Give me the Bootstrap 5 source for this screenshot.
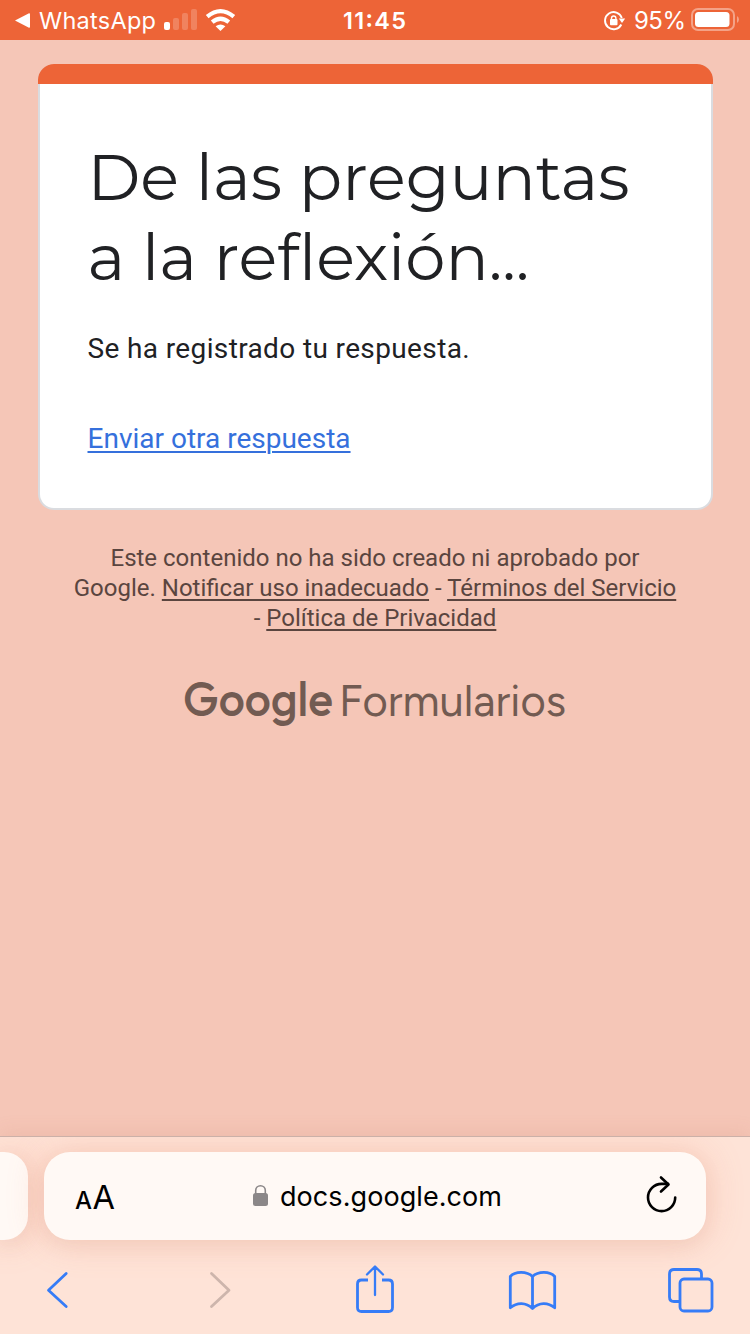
<!DOCTYPE html>
<html lang="es">
<head>
<meta charset="utf-8">
<meta name="viewport" content="width=device-width, initial-scale=1">
<title>De las preguntas a la reflexión...</title>
<link rel="stylesheet" href="https://cdn.jsdelivr.net/npm/bootstrap@5.3.0/dist/css/bootstrap.min.css">
<style>
  body { background: #f5c6b7; font-family: Roboto, sans-serif; color: #202124; }
  svg { display: block; flex: none; overflow: visible; }
  .ui { font-family: Inter, sans-serif; }
  .screen { height: 1334px; }
  .status { height: 40px; background: #ed6437; }
  .form-card { width: 675px; height: 446px; margin-top: 24px; border: 2px solid #dadce0; border-top: 0; border-radius: 16px; }
  .form-strip { height: 20px; margin: 0 -2px; background: #ed6437; border-radius: 16px 16px 0 0; }
  .form-content { padding: 53px 48px 0; }
  .form-title { font: 400 64px/80px Montserrat, Inter, sans-serif; color: #202124; white-space: nowrap; margin: 0 0 32px; }
  .msg { font-size: 28px; line-height: 40px; letter-spacing: .37px; margin-bottom: 50px; }
  .again { font-size: 28px; line-height: 40px; color: #3570dc; text-underline-offset: 3px; text-decoration-thickness: 2px; }
  .legal { font-size: 24px; line-height: 30px; color: #5a453f; margin-top: 33px; }
  .legal a { color: inherit; text-decoration-thickness: 2px; text-underline-offset: 3px; }
  .brand-text { fill: #725b52; font-family: Outfit, Montserrat, sans-serif; }
  .brand-text .product { font-family: Figtree, Montserrat, sans-serif; }
  .toolbar { height: 198px; background: #fee3d7; border-top: 1px solid #cbb0a8; padding-top: 15px; overflow: hidden; box-shadow: 0 -4px 18px rgba(190,110,85,.12); }
  .tab-prev { width: 28px; height: 88px; background: #fff9f5; border-radius: 0 24px 24px 0; box-shadow: 0 0 34px 4px rgba(242,130,100,.22), 0 6px 20px rgba(120,90,70,.07); }
  .address { width: 662px; height: 88px; margin-left: 16px; background: #fff9f5; border-radius: 26px; box-shadow: 0 0 34px 4px rgba(242,130,100,.22), 0 6px 20px rgba(120,90,70,.07); }
</style>
</head>
<body>
<div class="screen d-flex flex-column overflow-hidden">
  <header class="status">
    <svg class="ui" width="750" height="40" fill="#fff">
      <path d="M15 20.500 28.500 13.400Q30 12.800 30 14.300V26.700Q30 28.200 28.500 27.600Z"/>
      <text x="39" y="29" font-size="23.500" textLength="117">WhatsApp</text>
      <rect x="164" y="22" width="6" height="8" rx="2"/>
      <g opacity=".2"><rect x="173" y="18" width="6" height="12" rx="2"/><rect x="182" y="13" width="6" height="17" rx="2"/><rect x="191" y="9" width="6" height="21" rx="2"/></g>
      <g fill="none" stroke="#fff" stroke-width="4.200"><path d="M207.200 16.700Q220.500 5.500 233.800 16.700"/><path d="M212.200 22.200Q220.500 15.200 228.800 22.200"/></g>
      <path d="M215.600 26.300Q220.500 22.500 225.400 26.300L220.500 31Z"/>
      <text x="343" y="29" font-size="23.500" font-weight="600" textLength="63">11:45</text>
      <path d="M621.300 24.500A8.600 8.600 0 1 1 621.800 18" fill="none" stroke="#fff" stroke-width="1.900"/>
      <path d="M618.800 18.500H625.200L622 23Z"/>
      <rect x="610" y="19" width="7.500" height="6.300" rx="1"/><path d="M611.500 20V18.200a2.200 2.200 0 0 1 4.400 0V20" fill="none" stroke="#fff" stroke-width="1.400"/>
      <text x="634" y="29" font-size="24" textLength="52">95%</text>
      <rect x="692" y="9" width="42" height="21" rx="6" fill="none" stroke="#fff" stroke-opacity=".4" stroke-width="2"/>
      <rect x="695" y="12" width="34.500" height="15" rx="3.500"/><path d="M737 16Q739 17.300 739 19.500T737 23Z" opacity=".4"/>
    </svg>
  </header>

  <main class="flex-grow-1">
    <section class="form-card card mx-auto">
      <div class="form-strip"></div>
      <div class="form-content">
        <h1 class="form-title">De las preguntas<br>a la reflexión...</h1>
        <p class="msg">Se ha registrado tu respuesta.</p>
        <a class="again" href="#">Enviar otra respuesta</a>
      </div>
    </section>
    <p class="legal text-center mb-0">Este contenido no ha sido creado ni aprobado por<br>Google. <a href="#">Notificar uso inadecuado</a> - <a href="#">Términos del Servicio</a><br>- <a href="#">Política de Privacidad</a></p>
    <svg class="brand-text" width="750" height="100">
      <text x="183" y="82.500" font-size="49" font-weight="500" textLength="150" lengthAdjust="spacingAndGlyphs">Google</text>
      <text class="product" x="339" y="83" font-size="44" font-weight="400" textLength="227" lengthAdjust="spacingAndGlyphs">Formularios</text>
    </svg>
  </main>

  <footer class="toolbar ui">
    <div class="d-flex">
      <div class="tab-prev"></div>
      <div class="address">
        <svg width="662" height="88">
          <text x="31" y="56.500" font-size="24" font-weight="500" textLength="17" lengthAdjust="spacingAndGlyphs">A</text>
          <text x="48.500" y="56.500" font-size="33" textLength="22.500" lengthAdjust="spacingAndGlyphs">A</text>
          <rect x="209" y="41" width="15" height="13" rx="2.500" fill="#8b8788"/><path d="M211.700 42V38.500a4.800 4.800 0 0 1 9.600 0V42" fill="none" stroke="#8b8788" stroke-width="1.600"/>
          <text x="236" y="54" font-size="27" textLength="222">docs.google.com</text>
          <g fill="none" stroke="#000" stroke-width="2.600" stroke-linecap="round" stroke-linejoin="round"><path d="M631.200 45.500A13.600 13.600 0 1 1 617.600 31.900H624"/><path d="M617 25.500 624.500 32.500 617 39.500"/></g>
        </svg>
      </div>
    </div>
    <svg width="750" height="94" fill="none" stroke="#367cf7" stroke-width="2.800" stroke-linecap="round" stroke-linejoin="round">
      <path d="M66.200 33.500 48.500 50.200 66.200 66.500"/>
      <path d="M211.500 33.500 229 50.200 211.500 66.500" stroke="#cdb5ac"/>
      <path d="M368 40H361.500Q357.500 40 357.500 44V67.500Q357.500 71.500 361.500 71.500H388.500Q392.500 71.500 392.500 67.500V44Q392.500 40 388.500 40H382" stroke-linecap="butt"/><path d="M375 55V27M367 34.500 375 26.500 383 34.500" stroke-width="2.300"/>
      <path d="M532.500 36.500C527 31 515 31 510.300 36.500V67.800C517 62 526 62 532.500 68.500C539 62 548 62 554.700 67.800V36.500C550 31 538 31 532.500 36.500V68"/>
      <path d="M679 61.500H674Q669.500 61.500 669.500 57V34Q669.500 29.500 674 29.500H697Q701.500 29.500 701.500 34V39" stroke-linecap="butt"/><rect x="680" y="39" width="32" height="32" rx="4"/>
    </svg>
  </footer>
</div>
<script src="https://cdn.jsdelivr.net/npm/bootstrap@5.3.0/dist/js/bootstrap.bundle.min.js"></script>
</body>
</html>
